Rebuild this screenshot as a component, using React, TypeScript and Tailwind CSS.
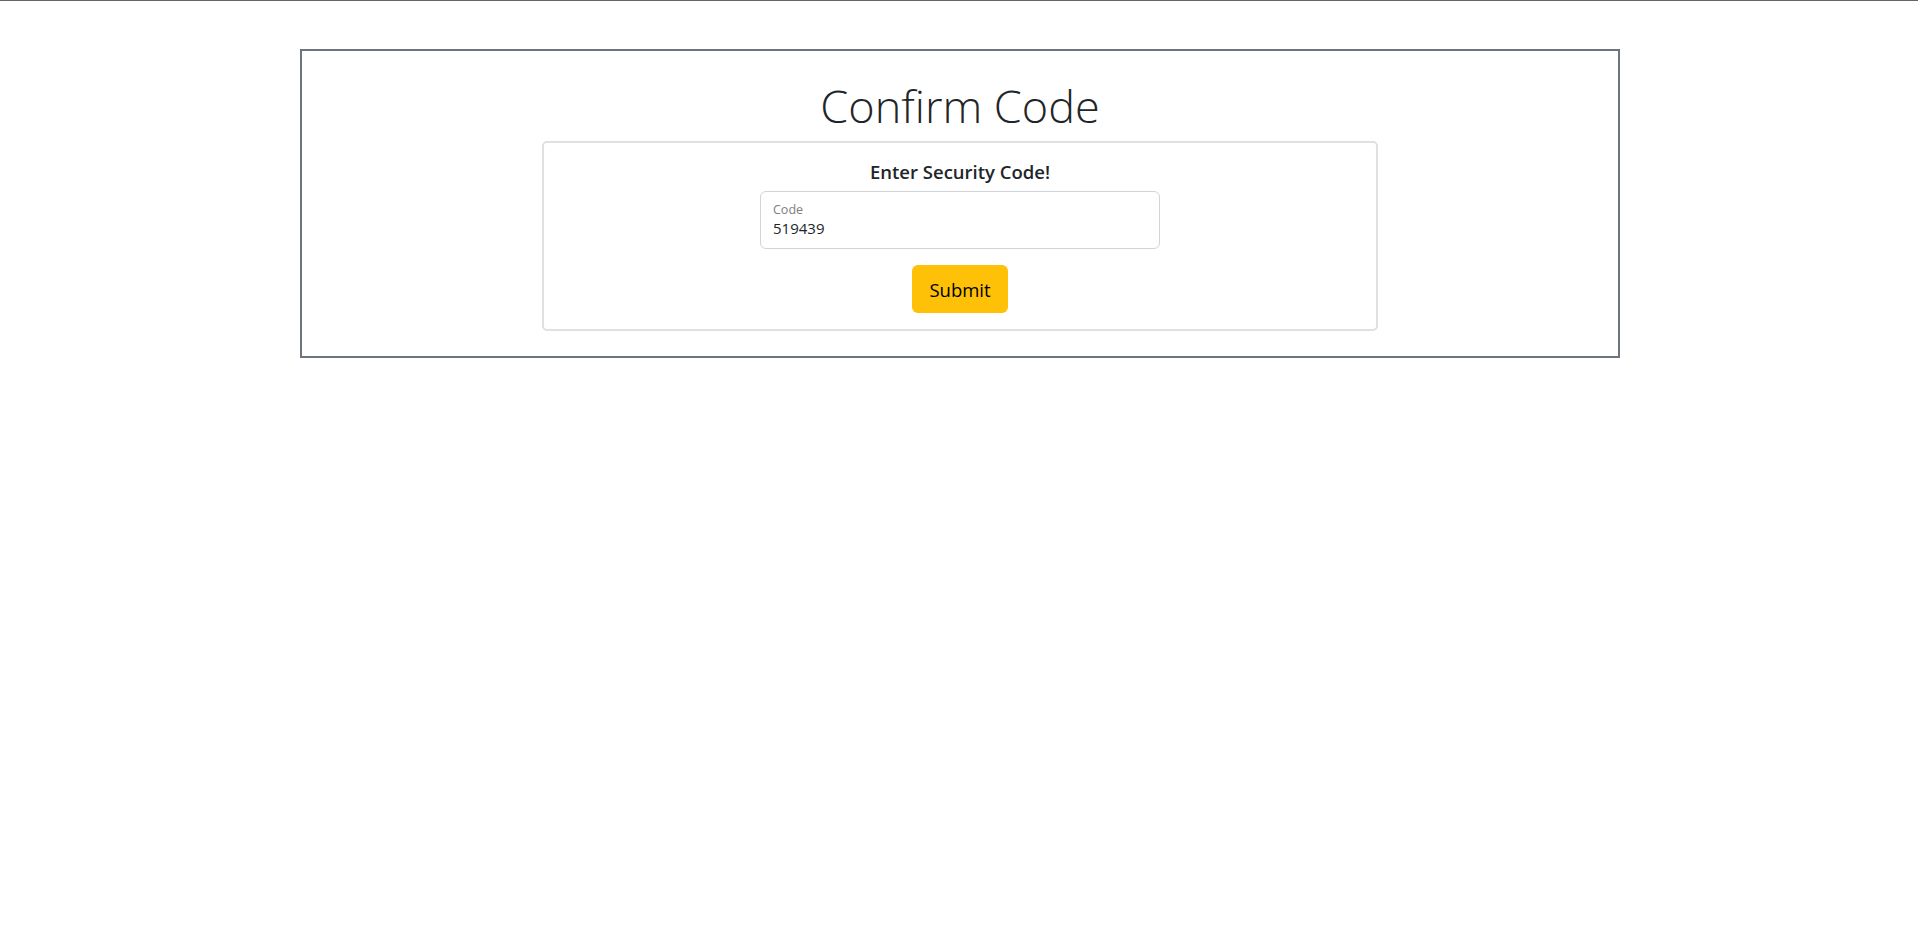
const App = () => {
  return (
    <div className="min-h-screen bg-white font-['Open_Sans','Noto_Sans',sans-serif] text-[#212529]">
      <div className="h-px bg-[#646464]"></div>

      <div className="mt-12 w-[1320px] ml-[300px] border-2 border-[#6c757d] pt-6 pb-[25px]">
        <h1 className="h-[58px] leading-[61px] mb-2 text-center text-[45px] font-light text-[#212529]">
          Confirm Code
        </h1>

        <div className="w-[836px] mx-auto border-2 border-[#dfe0e2] rounded-[5px] p-4">
          <h5 className="h-6 leading-[26px] mb-2 text-center text-[18.5px] font-semibold text-[#212529]">
            Enter Security Code!
          </h5>

          <div className="w-[400px] h-[58px] mx-auto border border-[#ced4da] rounded-md px-3 pt-[10px] flex flex-col">
            <label className="text-[12.5px] leading-4 text-[#7b7e81]">Code</label>
            <input
              className="w-full text-[15px] leading-5 text-[#212529] outline-none bg-transparent"
              defaultValue="519439"
              readOnly
            />
          </div>

          <div className="flex justify-center mt-4">
            <button className="w-24 h-12 pt-[2px] bg-[#ffc107] text-black text-[18.5px] rounded-md">
              Submit
            </button>
          </div>
        </div>
      </div>
    </div>
  );
};

export default App;
